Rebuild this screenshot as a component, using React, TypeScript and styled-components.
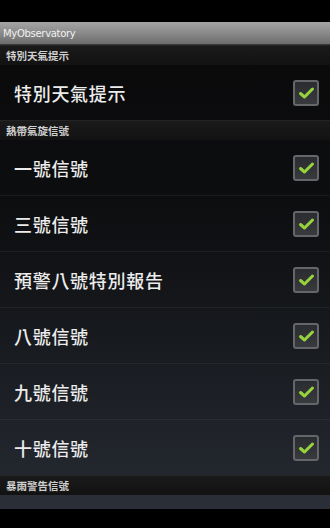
import React from 'react';
import styled, { createGlobalStyle } from 'styled-components';

const GlobalStyle = createGlobalStyle`
	html, body {
		margin: 0;
		padding: 0;
		background: #000;
	}
	body {
		font-family: "Noto Sans CJK TC", "Noto Sans", sans-serif;
	}
`;

const Screen = styled.div`
	width: 330px;
	height: 528px;
	display: flex;
	flex-direction: column;
	background: #000;
	overflow: hidden;
`;

const StatusBar = styled.div`
	height: 22px;
	background: #000;
	flex-shrink: 0;
`;

const TitleBar = styled.div`
	height: 22px;
	flex-shrink: 0;
	display: flex;
	align-items: center;
	padding-left: 3px;
	background: linear-gradient(#a4a4a4, #8a8a8a 50%, #6c6c6c);
	border-bottom: 1px solid #3a3a3a;
	color: #f0f0f0;
	font-family: "DejaVu Sans", sans-serif;
	font-size: 10px;
	letter-spacing: -0.3px;
`;

const List = styled.div`
	flex: 1;
	display: flex;
	flex-direction: column;
	background: linear-gradient(#0a0a0b 0%, #0d0e10 35%, #1a1d22 70%, #262a32 100%);
`;

const SectionHeader = styled.div`
	height: 19px;
	flex-shrink: 0;
	display: flex;
	align-items: center;
	padding-left: 6px;
	background: linear-gradient(#1a1a1a, #121212);
	border-top: 1px solid #242424;
	color: #cfcfcf;
	font-size: 10.5px;
	font-weight: bold;
`;

const Row = styled.div<{ $first?: boolean }>`
	height: ${(p) => (p.$first ? 55 : 56)}px;
	flex-shrink: 0;
	display: flex;
	align-items: center;
	justify-content: space-between;
	padding: 0 11px 0 14px;
	box-sizing: border-box;
	border-top: ${(p) => (p.$first ? 'none' : '1px solid rgba(255,255,255,0.05)')};
`;

const Label = styled.span`
	color: #ececec;
	font-size: 18px;
	font-weight: 500;
	letter-spacing: 0.7px;
`;

const Box = styled.div`
	width: 26px;
	height: 26px;
	box-sizing: border-box;
	border: 2px solid #64666a;
	border-radius: 3px;
	background: linear-gradient(#2a2c30, #383a3e);
	display: flex;
	align-items: center;
	justify-content: center;
`;

const Footer = styled.div`
	height: 14px;
	flex-shrink: 0;
	background: #2a2e36;
`;

const BottomBlack = styled.div`
	flex: 1;
	background: #000;
`;

const Check = () => (
	<Box>
		<svg width="17" height="14" viewBox="0 0 17 14">
			<path d="M2.5 7.5 L6.5 11 L14.5 3" fill="none" stroke="#96d43e" strokeWidth="3" strokeLinecap="round" strokeLinejoin="round" />
		</svg>
	</Box>
);

const signals = ['一號信號', '三號信號', '預警八號特別報告', '八號信號', '九號信號', '十號信號'];

const App = () => (
	<Screen>
		<GlobalStyle />
		<StatusBar />
		<TitleBar>MyObservatory</TitleBar>
		<List>
			<SectionHeader>特別天氣提示</SectionHeader>
			<Row $first>
				<Label>特別天氣提示</Label>
				<Check />
			</Row>
			<SectionHeader>熱帶氣旋信號</SectionHeader>
			{signals.map((s, i) => (
				<Row key={s} $first={i === 0}>
					<Label>{s}</Label>
					<Check />
				</Row>
			))}
			<SectionHeader>暴雨警告信號</SectionHeader>
			<Footer />
		</List>
		<BottomBlack />
	</Screen>
);

export default App;
